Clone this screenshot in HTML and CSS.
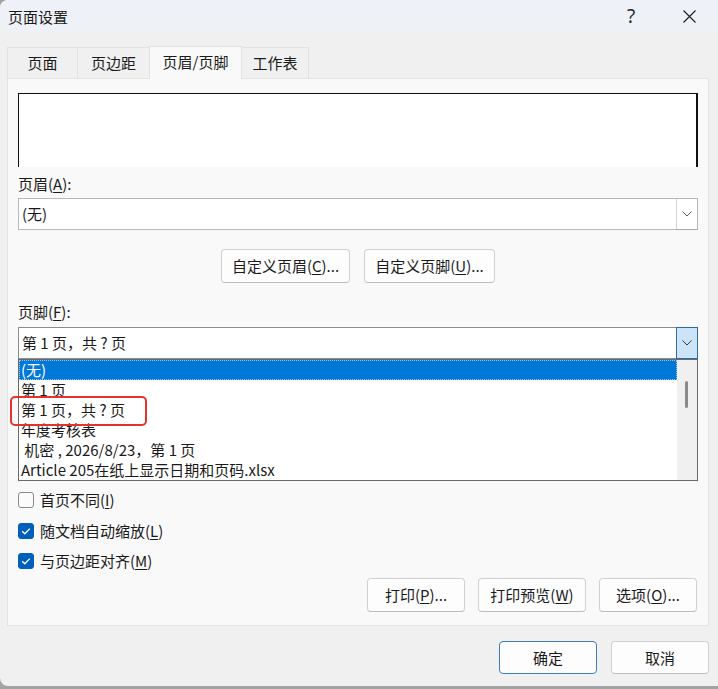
FILE: index.html
```html
<!DOCTYPE html>
<html lang="zh-CN">
<head>
<meta charset="utf-8">
<title>页面设置</title>
<link rel="stylesheet" href="styles.css">
</head>
<body>
<div class="window">
  <header class="titlebar">
    <span class="title">页面设置</span>
    <div class="caption-buttons">
      <span class="caption help">?</span>
      <span class="caption close">
        <svg width="13" height="13" viewBox="0 0 13 13"><path d="M0.5 0.5L12.5 12.5M12.5 0.5L0.5 12.5" stroke="#1b1b1b" stroke-width="1.1" fill="none"/></svg>
      </span>
    </div>
  </header>

  <nav class="tabs">
    <div class="tab tab-page">页面</div>
    <div class="tab tab-margin">页边距</div>
    <div class="tab tab-hf active">页眉/页脚</div>
    <div class="tab tab-sheet">工作表</div>
  </nav>

  <section class="panel">
    <div class="preview"></div>

    <div class="field-label header-label">页眉(<u>A</u>):</div>
    <div class="select">
      <span class="select-value">(无)</span>
      <span class="select-btn">
        <svg width="10" height="6" viewBox="0 0 10 6"><path d="M0.5 0.5L5 5L9.5 0.5" stroke="#5c5c5c" stroke-width="1" fill="none"/></svg>
      </span>
    </div>

    <div class="custom-row">
      <button class="btn btn-custom-header">自定义页眉(<u>C</u>)...</button>
      <button class="btn btn-custom-footer">自定义页脚(<u>U</u>)...</button>
    </div>

    <div class="field-label footer-label">页脚(<u>F</u>):</div>
    <div class="combo">
      <div class="select select-open">
        <span class="select-value">第 1 页，共 ? 页</span>
        <span class="select-btn">
          <svg width="10" height="6" viewBox="0 0 10 6"><path d="M0.5 0.5L5 5L9.5 0.5" stroke="#3a3a3a" stroke-width="1" fill="none"/></svg>
        </span>
      </div>
      <div class="dropdown">
        <ul class="options">
          <li class="option selected">(无)</li>
          <li class="option">第 1 页</li>
          <li class="option">第 1 页，共 ? 页</li>
          <li class="option">年度考核表</li>
          <li class="option"> 机密 , 2026/8/23，第 1 页</li>
          <li class="option">Article 205在纸上显示日期和页码.xlsx</li>
        </ul>
        <div class="scrollbar"><span class="thumb"></span></div>
      </div>
      <span class="mark"></span>
    </div>

    <div class="checks">
      <label class="check">
        <span class="box"></span>
        <span>首页不同(<u>I</u>)</span>
      </label>
      <label class="check">
        <span class="box checked"><svg width="16" height="16" viewBox="0 0 16 16"><path d="M4.2 8.3L6.8 10.8L11.8 5.6" stroke="#fff" stroke-width="1.3" fill="none"/></svg></span>
        <span>随文档自动缩放(<u>L</u>)</span>
      </label>
      <label class="check">
        <span class="box checked"><svg width="16" height="16" viewBox="0 0 16 16"><path d="M4.2 8.3L6.8 10.8L11.8 5.6" stroke="#fff" stroke-width="1.3" fill="none"/></svg></span>
        <span>与页边距对齐(<u>M</u>)</span>
      </label>
    </div>

    <div class="actions">
      <button class="btn btn-print">打印(<u>P</u>)...</button>
      <button class="btn btn-preview">打印预览(<u>W</u>)</button>
      <button class="btn btn-options">选项(<u>O</u>)...</button>
    </div>
  </section>

  <footer class="dialog-buttons">
    <button class="btn btn-dialog btn-default">确定</button>
    <button class="btn btn-dialog">取消</button>
  </footer>
</div>
</body>
</html>
```
FILE: styles.css
```css
* {
  box-sizing: border-box;
}

html,
body {
  margin: 0;
  padding: 0;
}

body {
  width: 718px;
  height: 689px;
  overflow: hidden;
  background: #a3a3a3;
  font-family: "Noto Sans CJK SC", "Noto Sans", sans-serif;
  font-size: 15px;
  color: #1a1a1a;
}

u {
  text-decoration-thickness: 1px;
  text-underline-offset: 2px;
}

/* dialog window */
.window {
  height: 686px;
  background: #f0f0f0;
  border-radius: 8px 0 0 8px;
  display: flex;
  flex-direction: column;
  overflow: hidden;
}

.titlebar {
  height: 36px;
  flex: none;
  display: flex;
  align-items: center;
  padding-left: 8px;
  background: linear-gradient(#eef2f8, #eef1f6 80%, #efefef);
  line-height: 20px;
}

.title {
  font-size: 15px;
  margin-top: -2px;
}

.caption-buttons {
  margin-left: auto;
  display: flex;
  height: 100%;
}

.caption {
  width: 58px;
  display: flex;
  align-items: center;
  justify-content: center;
  margin-top: -3px;
}

.help {
  font-family: "Noto Sans", sans-serif;
  font-size: 19px;
  color: #2a2a2a;
  margin-top: -4px;
}

/* tabs */
.tabs {
  margin-top: 10px;
  height: 32px;
  flex: none;
  display: flex;
  align-items: flex-end;
  padding-left: 7px;
  line-height: 20px;
}

.tab {
  height: 31px;
  display: flex;
  align-items: center;
  justify-content: center;
  background: #f0f0f0;
  border: 1px solid #e2e2e2;
  border-bottom: none;
  margin-right: -1px;
}

.tab-page { width: 71px; }
.tab-margin { width: 73px; }
.tab-hf { width: 93px; }
.tab-sheet { width: 68px; }

.tab.active {
  height: 33px;
  margin-bottom: -1px;
  background: #f9f9f9;
  position: relative;
  z-index: 1;
  padding-bottom: 2px;
}

/* tab page */
.panel {
  margin-left: 7px;
  width: 702px;
  height: 548px;
  flex: none;
  background: #f9f9f9;
  border: 1px solid #e4e4e4;
  padding: 0 10px 13px;
  display: flex;
  flex-direction: column;
  line-height: 20px;
}

.preview {
  margin-top: 14px;
  height: 74px;
  background: #fff;
  border-top: 1px solid #111;
  border-left: 1px solid #111;
  border-right: 2px solid #111;
}

.field-label {
  line-height: 22px;
}

.header-label {
  margin-top: 6px;
}

.footer-label {
  margin-top: 18px;
}

.select {
  margin-top: 3px;
  height: 32px;
  display: flex;
  align-items: stretch;
  background: #fff;
  border: 1px solid #b9b9b9;
}

.select-value {
  flex: 1;
  display: flex;
  align-items: center;
  padding-left: 3px;
}

.select-btn {
  width: 21px;
  display: flex;
  align-items: center;
  justify-content: center;
  border-left: 1px solid #d6d6d6;
  background: #fff;
  box-shadow: 0 1px 1px rgba(0, 0, 0, 0.08);
}

.custom-row {
  margin-top: 19px;
  display: flex;
  justify-content: center;
  gap: 14px;
}

.btn {
  font: inherit;
  color: #1a1a1a;
  height: 34px;
  padding: 0;
  background: #fdfdfd;
  border: 1px solid #d0d0d0;
  border-bottom-color: #bdbdbd;
  border-radius: 4px;
  display: flex;
  align-items: center;
  justify-content: center;
  line-height: 20px;
}

.btn-custom-header { width: 129px; }
.btn-custom-footer { width: 131px; }

/* footer combo with its open list */
.combo {
  position: relative;
  margin-top: 4px;
}

.combo .select {
  margin-top: 0;
  border-color: #8c8c8c;
}

.select-open .select-btn {
  margin: -1px -1px -1px 0;
  width: 22px;
  background: #cce4f7;
  border: 1px solid #2f6aa6;
  box-shadow: none;
}

.dropdown {
  height: 122px;
  display: flex;
  background: #fff;
  border: 1px solid #6a6a6a;
  margin-top: 0;
}

.options {
  list-style: none;
  margin: 0;
  padding: 0;
  flex: 1;
}

.option {
  height: 20px;
  line-height: 20px;
  padding-left: 2px;
  white-space: pre;
}

.option.selected {
  background: #0078d7;
  color: #fff;
  outline: 1px dotted #9fc4ea;
  outline-offset: -1px;
}

.scrollbar {
  width: 20px;
  background: #f0f0f0;
  position: relative;
}

.thumb {
  position: absolute;
  left: 8px;
  top: 21px;
  width: 3px;
  height: 27px;
  border-radius: 2px;
  background: #8a8a8a;
}

.mark {
  position: absolute;
  left: -8px;
  top: 69px;
  width: 137px;
  height: 30px;
  border: 2.5px solid #e5322f;
  border-radius: 5px;
}

/* option checkboxes */
.checks {
  margin-top: 9px;
  display: flex;
  flex-direction: column;
  gap: 10.5px;
}

.check {
  height: 20px;
  display: flex;
  align-items: center;
  gap: 6px;
}

.box {
  width: 16px;
  height: 16px;
  border: 1px solid #8a8a8a;
  border-radius: 3px;
  background: #fbfbfb;
  display: flex;
}

.box.checked {
  border-color: #005fb8;
  background: #005fb8;
}

.box.checked svg {
  margin: -1px;
}

.actions {
  margin-top: auto;
  display: flex;
  justify-content: flex-end;
  gap: 13px;
  padding-right: 1px;
}

.btn-print { width: 98px; }
.btn-preview { width: 108px; }
.btn-options { width: 98px; }

/* dialog buttons */
.dialog-buttons {
  margin-top: 15px;
  display: flex;
  justify-content: flex-end;
  gap: 14px;
  padding-right: 9px;
}

.btn-dialog {
  width: 98px;
  height: 33px;
}

.btn-default {
  border-color: #3f7cc0;
}
```
